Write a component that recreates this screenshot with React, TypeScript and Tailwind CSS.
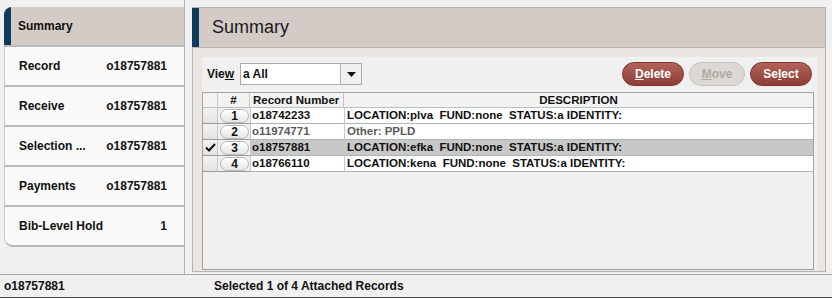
import React from "react";

const navRows = [
  { label: "Record", value: "o18757881" },
  { label: "Receive", value: "o18757881" },
  { label: "Selection ...", value: "o18757881" },
  { label: "Payments", value: "o18757881" },
  { label: "Bib-Level Hold", value: "1" },
];

const records = [
  { n: "1", rec: "o18742233", desc: "LOCATION:plva  FUND:none  STATUS:a IDENTITY:", muted: false, selected: false },
  { n: "2", rec: "o11974771", desc: "Other: PPLD", muted: true, selected: false },
  { n: "3", rec: "o18757881", desc: "LOCATION:efka  FUND:none  STATUS:a IDENTITY:", muted: false, selected: true },
  { n: "4", rec: "o18766110", desc: "LOCATION:kena  FUND:none  STATUS:a IDENTITY:", muted: false, selected: false },
];

function Sidebar() {
  return (
    <div className="w-[185px] shrink-0 pl-[4px] pt-[7px] border-r border-[#b4b4b4]">
      <div className="w-[180px]">
        <div className="h-[40px] flex rounded-tl-[8px] overflow-hidden bg-[#d3ccc6] border-b-2 border-[#b9b9b9]">
          <div className="w-[7px] bg-[#0d3b5c]" />
          <div className="flex items-center pl-[7px] font-bold text-[12px] text-[#111]">Summary</div>
        </div>
        {navRows.map((r, i) => (
          <div
            key={r.label}
            className={
              "h-[40px] flex items-center justify-between pl-[14px] pr-[17px] bg-[#fafafa] border-l border-[#c8c8c8] border-b-2 border-b-[#b9b9b9] text-[12px] font-bold text-[#111] " +
              (i === navRows.length - 1 ? "rounded-bl-[9px]" : "")
            }
          >
            <span>{r.label}</span>
            <span>{r.value}</span>
          </div>
        ))}
      </div>
    </div>
  );
}

function PillButton({ children, disabled }: { children: React.ReactNode; disabled?: boolean }) {
  return (
    <div
      className={
        "h-[24px] rounded-full flex items-center justify-center text-[12px] font-bold " +
        (disabled
          ? "bg-[#dcd8d3] border border-[#c9c4be] text-[#b1aba5]"
          : "bg-linear-to-b from-[#b3625a] to-[#8e3d35] border border-[#7e342d] text-white")
      }
    >
      {children}
    </div>
  );
}

function Toolbar() {
  return (
    <div className="h-[24px] flex items-center pl-[5px] pr-[5px]">
      <span className="text-[12px] font-bold text-[#111] w-[33px]">
        Vie<span className="underline">w</span>
      </span>
      <div className="w-[122px] h-[22px] flex border border-[#a9a9a9] bg-white">
        <div className="flex-1 flex items-center pl-[2px] text-[12px] font-bold text-[#111]">a All</div>
        <div className="w-[21px] border-l border-[#b4b4b4] bg-[#f0f0f0] flex items-center justify-center">
          <svg width="9" height="5" viewBox="0 0 9 5">
            <path d="M0 0 L9 0 L4.5 5 Z" fill="#111" />
          </svg>
        </div>
      </div>
      <div className="flex-1" />
      <div className="flex gap-[5px]">
        <div className="w-[62px]">
          <PillButton>
            <span className="underline">D</span>elete
          </PillButton>
        </div>
        <div className="w-[56px]">
          <PillButton disabled>
            <span className="underline">M</span>ove
          </PillButton>
        </div>
        <div className="w-[62px]">
          <PillButton>
            Se<span className="underline">l</span>ect
          </PillButton>
        </div>
      </div>
    </div>
  );
}

function RecordTable() {
  return (
    <div className="mt-[6px] w-[612px] h-[178px] border border-[#a3a3a3] bg-[#f0f0f0] text-[11.5px] font-bold">
      <div className="h-[15px] flex bg-[#f2f2f2] border-b border-[#b3c2c6] text-[#111] leading-[14px] whitespace-nowrap">
        <div className="w-[15px] border-r border-[#c8c8c8]" />
        <div className="w-[32px] border-r border-[#c8c8c8] text-center">#</div>
        <div className="w-[94px] border-r border-[#c8c8c8] pl-[3px] overflow-hidden">Record Number</div>
        <div className="flex-1 text-center">DESCRIPTION</div>
      </div>
      {records.map((r) => (
        <div key={r.n} className="h-[16px] flex leading-[15px]">
          <div className="w-[15px] bg-linear-to-b from-[#f2f2f2] to-[#e3e3e3] border-r border-[#c8c8c8] border-b border-b-[#9a9a9a] flex items-center justify-center">
            {r.selected && (
              <svg width="11" height="9" viewBox="0 0 11 9">
                <path d="M1 4.5 L4 7.5 L10 1" stroke="#111" strokeWidth="2" fill="none" />
              </svg>
            )}
          </div>
          <div className="w-[32px] bg-[#f0f0f0] border-b border-[#9a9a9a] flex items-center justify-center pl-[1px]">
            <div className="w-[29px] h-[14px] rounded-full border border-[#b9b9b9] bg-linear-to-b from-[#ffffff] to-[#e4e4e4] flex items-center justify-center text-[#111] leading-[12px] text-[12px]">
              {r.n}
            </div>
          </div>
          <div
            className={
              "w-[94px] pl-[1px] border-l border-[#c8c8c8] border-b border-b-[#a9b7bb] " +
              (r.selected ? "bg-[#c8c8c8]" : "bg-white") +
              (r.muted ? " text-[#5a5a5a]" : " text-[#111]")
            }
          >
            {r.rec}
          </div>
          <div
            className={
              "flex-1 pl-[2px] border-l border-[#c8c8c8] border-b border-b-[#a9b7bb] whitespace-pre " +
              (r.selected ? "bg-[#c8c8c8]" : "bg-white") +
              (r.muted ? " text-[#5a5a5a]" : " text-[#111]")
            }
          >
            {r.desc}
          </div>
        </div>
      ))}
    </div>
  );
}

function MainPanel() {
  return (
    <div className="ml-[7px] w-[634px] pt-[7px] pb-[2px] flex flex-col">
      <div className="h-[40px] flex bg-[#d3ccc6] border-t border-r border-[#b8b2ac]">
        <div className="w-[7px] bg-[#0d3b5c]" />
        <div className="flex items-center pl-[13px] text-[18px] text-[#1a1a1a]">Summary</div>
      </div>
      <div className="flex-1 bg-[#e9e5e2] border-x border-b border-[#b9b4ae] border-t border-t-[#b8b2ac] pl-[9px] pr-[8px] pt-[9px] pb-[1px]">
        <div className="h-full bg-[#f0f0f0] pt-[5px]">
          <Toolbar />
          <RecordTable />
        </div>
      </div>
    </div>
  );
}

export default function App() {
  return (
    <div className="w-[832px] h-[298px] bg-[#f0f0f0] flex flex-col overflow-hidden font-['Liberation_Sans',Arial,sans-serif]">
      <div className="h-[274px] flex">
        <Sidebar />
        <MainPanel />
      </div>
      <div className="h-[24px] flex items-center border-t border-[#a8a8a8] border-b border-b-[#505050] text-[12px] font-bold text-[#111]">
        <span className="pl-[4px] w-[214px]">o18757881</span>
        <span>Selected 1 of 4 Attached Records</span>
      </div>
    </div>
  );
}
